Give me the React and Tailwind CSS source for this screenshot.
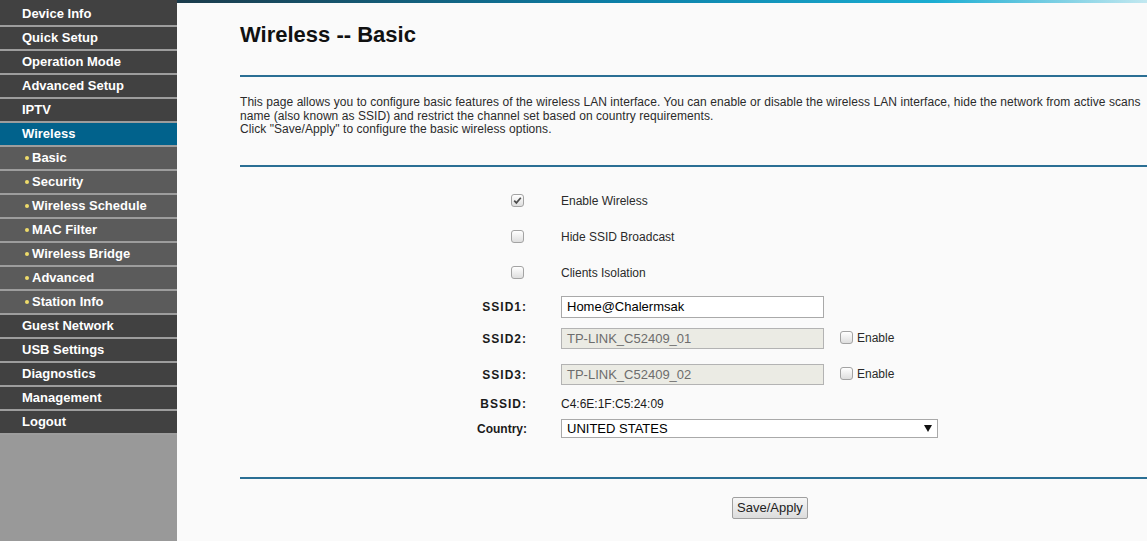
import React from "react";

const menu = [
  { t: "Device Info" },
  { t: "Quick Setup" },
  { t: "Operation Mode" },
  { t: "Advanced Setup" },
  { t: "IPTV" },
  { t: "Wireless", active: true },
  { t: "Basic", sub: true },
  { t: "Security", sub: true },
  { t: "Wireless Schedule", sub: true },
  { t: "MAC Filter", sub: true },
  { t: "Wireless Bridge", sub: true },
  { t: "Advanced", sub: true },
  { t: "Station Info", sub: true },
  { t: "Guest Network" },
  { t: "USB Settings" },
  { t: "Diagnostics" },
  { t: "Management" },
  { t: "Logout" },
];

function MenuItem({ item }) {
  const bg = item.active ? "bg-[#01628c]" : item.sub ? "bg-[#5b5b5b]" : "bg-[#414141]";
  return (
    <div className={`h-[24px] border-b-2 border-[#9d9d9d] ${bg} flex items-center text-[13px] font-bold leading-[22px] text-white`}>
      {item.sub ? (
        <>
          <span className="ml-[25px] h-[4px] w-[4px] rounded-full bg-[#eedb6a]" />
          <span className="ml-[3px]">{item.t}</span>
        </>
      ) : (
        <span className="ml-[22px]">{item.t}</span>
      )}
    </div>
  );
}

function Box({ checked }) {
  return (
    <span className="inline-flex h-[13px] w-[13px] items-center justify-center rounded-[3px] border border-[#a3a3a3] bg-gradient-to-b from-white to-[#dedede]">
      {checked && (
        <svg width="11" height="11" viewBox="0 0 11 11">
          <path d="M2.2 5.6 L4.4 7.9 L8.8 2.8" fill="none" stroke="#4d4d4d" strokeWidth="1.7" />
        </svg>
      )}
    </span>
  );
}

function Row({ h, label, spaced, children }) {
  return (
    <div className={`flex items-center ${h}`}>
      <div className={`w-[287px] text-right text-[12px] font-bold text-[#1a1a1a] ${spaced ? "tracking-[1px]" : ""}`}>
        {label}
      </div>
      <div className="ml-[34px] flex items-center">{children}</div>
    </div>
  );
}

function CheckRow({ checked, text }) {
  return (
    <div className="flex h-[36px] items-center">
      <div className="flex w-[287px] justify-end pr-[3px]">
        <Box checked={checked} />
      </div>
      <div className="ml-[34px] text-[12px] text-[#2a2a2a]">{text}</div>
    </div>
  );
}

export default function App() {
  return (
    <div className="flex h-[541px] w-[1147px] overflow-hidden bg-[#fafafa] font-['Liberation_Sans',Arial,sans-serif]">
      <div className="flex w-[177px] shrink-0 flex-col bg-[#999999]">
        <div className="h-[3px] bg-[#414141]" />
        {menu.map((m) => (
          <MenuItem key={m.t} item={m} />
        ))}
      </div>

      <div className="flex min-w-0 flex-1 flex-col overflow-hidden">
        <div className="h-[3px] bg-[linear-gradient(90deg,#1b3b4b,#0c7ea6_45%,#1badd2_78%,#c2e8f0)]" />
        <div className="pl-[63px]">
          <h1 className="mt-[19px] h-[26px] text-[22px] font-bold leading-[26px] text-[#111]">Wireless -- Basic</h1>
          <div className="mt-[27px] h-[2px] bg-[#2a6f94]" />
          <div className="mt-[19px] whitespace-nowrap text-[12px] leading-[13.5px] tracking-[0.06px] text-[#2b2b2b]">
            <p>
              This page allows you to configure basic features of the wireless LAN interface. You can enable or disable the wireless LAN interface, hide the network from active scans
            </p>
            <p>name (also known as SSID) and restrict the channel set based on country requirements.</p>
            <p>Click "Save/Apply" to configure the basic wireless options.</p>
          </div>
          <div className="mt-[28px] h-[2px] bg-[#2a6f94]" />

          <div className="mt-[16px] flex flex-col">
            <CheckRow checked text="Enable Wireless" />
            <CheckRow text="Hide SSID Broadcast" />
            <CheckRow text="Clients Isolation" />
            <Row h="h-[32px]" label="SSID1:" spaced>
              <div className="flex h-[22px] w-[263px] items-center border border-[#a9a9a9] bg-white px-[5px] text-[13px] text-black">
                Home@Chalermsak
              </div>
            </Row>
            <Row h="h-[32px]" label="SSID2:" spaced>
              <div className="flex h-[21px] w-[263px] items-center border border-[#b3b3b3] bg-[#ebebe4] px-[5px] text-[13px] text-[#6d6d6d]">
                TP-LINK_C52409_01
              </div>
              <span className="ml-[16px]">
                <Box />
              </span>
              <span className="ml-[4px] -mt-[2px] text-[12px] text-[#2a2a2a]">Enable</span>
            </Row>
            <Row h="h-[40px]" label="SSID3:" spaced>
              <div className="flex h-[21px] w-[263px] items-center border border-[#b3b3b3] bg-[#ebebe4] px-[5px] text-[13px] text-[#6d6d6d]">
                TP-LINK_C52409_02
              </div>
              <span className="ml-[16px]">
                <Box />
              </span>
              <span className="ml-[4px] -mt-[2px] text-[12px] text-[#2a2a2a]">Enable</span>
            </Row>
            <Row h="h-[18px]" label="BSSID:" spaced>
              <span className="text-[12px] text-[#1a1a1a]">C4:6E:1F:C5:24:09</span>
            </Row>
            <Row h="h-[32px]" label="Country:">
              <div className="flex h-[19px] w-[377px] items-center justify-between border border-[#a9a9a9] bg-white pl-[5px] pr-[5px] text-[13px] text-black">
                <span>UNITED STATES</span>
                <svg width="8" height="7" viewBox="0 0 8 7">
                  <path d="M0 0 H8 L4 7 Z" fill="#111" />
                </svg>
              </div>
            </Row>
          </div>

          <div className="mt-[32px] h-[2px] bg-[#2a6f94]" />
          <div className="mt-[18px] flex">
            <button className="ml-[492px] h-[22px] w-[76px] rounded-[2px] border border-[#9f9f9f] bg-gradient-to-b from-[#f6f6f6] to-[#dcdcdc] text-[13px] text-[#222]">
              Save/Apply
            </button>
          </div>
        </div>
      </div>
    </div>
  );
}
